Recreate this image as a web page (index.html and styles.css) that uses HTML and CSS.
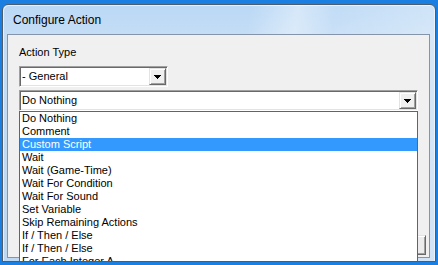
FILE: index.html
```html
<!DOCTYPE html>
<html lang="en">
<head>
  <meta charset="UTF-8">
  <title>Configure Action</title>
  <link rel="stylesheet" href="styles.css">
</head>
<body>
  <div class="window">
    <div class="titlebar">Configure Action</div>
    <div class="client">
      <div class="label">Action Type</div>
      <div class="combo combo-type">
        <span class="combo-text">- General</span>
        <span class="combo-btn"><svg width="7" height="4"><path d="M0 0h7v1h-1v1h-1v1h-1v1h-1v-1h-1v-1h-1v-1h-1z"/></svg></span>
      </div>
      <div class="combo combo-action">
        <span class="combo-text">Do Nothing</span>
        <span class="combo-btn"><svg width="7" height="4"><path d="M0 0h7v1h-1v1h-1v1h-1v1h-1v-1h-1v-1h-1v-1h-1z"/></svg></span>
        <ul class="dropdown">
          <li>Do Nothing</li>
          <li>Comment</li>
          <li class="selected">Custom Script</li>
          <li>Wait</li>
          <li>Wait (Game-Time)</li>
          <li>Wait For Condition</li>
          <li>Wait For Sound</li>
          <li>Set Variable</li>
          <li>Skip Remaining Actions</li>
          <li>If / Then / Else</li>
          <li>If / Then / Else</li>
          <li>For Each Integer A</li>
        </ul>
      </div>
      <div class="buttons">
        <button class="btn" type="button">OK</button>
      </div>
    </div>
  </div>
</body>
</html>
```

FILE: styles.css
```css
html, body {
  margin: 0;
  height: 100%;
}
body {
  background: #1b7fe2;
  padding: 4px 0 0 2px;
  box-sizing: border-box;
  overflow: hidden;
  font-family: "Liberation Sans", Arial, sans-serif;
  color: #000;
}
.window {
  width: 434px;
  height: 258px;
  box-sizing: border-box;
  border: 1px solid #4e5d6e;
  border-radius: 6px 6px 0 0;
  padding: 0 5px 3px 4px;
  display: flex;
  flex-direction: column;
  overflow: hidden;
  background:
    linear-gradient(100deg, rgba(255,255,255,0) 52%, rgba(255,255,255,.4) 62%, rgba(255,255,255,.1) 70%, rgba(255,255,255,.3) 90%),
    linear-gradient(#bad8f5, #c4ddf5 30px, #bfd8f1);
  box-shadow: inset 1px 1px rgba(255,255,255,.6), inset -1px 0 rgba(255,255,255,.5);
}
.titlebar {
  height: 29px;
  box-sizing: border-box;
  padding: 8px 0 0 6px;
  font-size: 12px;
  line-height: 14px;
}
.client {
  flex: 1;
  display: flex;
  flex-direction: column;
  align-items: flex-start;
  border: 1px solid #8594a8;
  background: #f0f0f0;
  padding: 11px 3px 2px 11px;
}
.label {
  font-size: 11px;
  line-height: 13px;
}
.combo {
  position: relative;
  display: flex;
  align-items: flex-start;
  height: 21px;
  box-sizing: border-box;
  padding: 1px;
  border: 1px solid;
  border-color: #a0a0a0 #fff #fff #a0a0a0;
  box-shadow: inset 1px 1px #696969, inset -1px -1px #e3e3e3;
  background: #fff;
}
.combo-type {
  width: 149px;
  margin-top: 7px;
}
.combo-action {
  width: 399px;
  margin-top: 3px;
}
.combo-text {
  flex: 1;
  font-size: 11px;
  line-height: 17px;
  padding-left: 1px;
}
.combo-btn {
  width: 17px;
  height: 17px;
  box-sizing: border-box;
  display: flex;
  align-items: center;
  justify-content: center;
  background: #f0f0f0;
  border: 1px solid;
  border-color: #e3e3e3 #696969 #696969 #e3e3e3;
  box-shadow: inset 1px 1px #fff, inset -1px -1px #a0a0a0;
}
.combo-btn svg {
  display: block;
  fill: #000;
}
.dropdown {
  position: absolute;
  top: calc(100% + 1px);
  left: -1px;
  right: -1px;
  z-index: 2;
  height: 170px;
  margin: 0;
  padding: 0;
  list-style: none;
  background: #fff;
  border: 1px solid #646464;
}
.dropdown li {
  font-size: 11px;
  line-height: 13px;
  padding-left: 2px;
  white-space: nowrap;
}
.dropdown li.selected {
  background: #3399ff;
  color: #fff;
}
.buttons {
  margin-top: auto;
  align-self: stretch;
  display: flex;
  justify-content: flex-end;
}
.btn {
  width: 75px;
  height: 20px;
  box-sizing: border-box;
  padding: 0;
  font-family: "Liberation Sans", Arial, sans-serif;
  font-size: 11px;
  background: #ececec;
  border: 1px solid;
  border-color: #e3e3e3 #696969 #696969 #e3e3e3;
  box-shadow: inset 1px 1px #fff, inset -1px -1px #a0a0a0;
}
```
